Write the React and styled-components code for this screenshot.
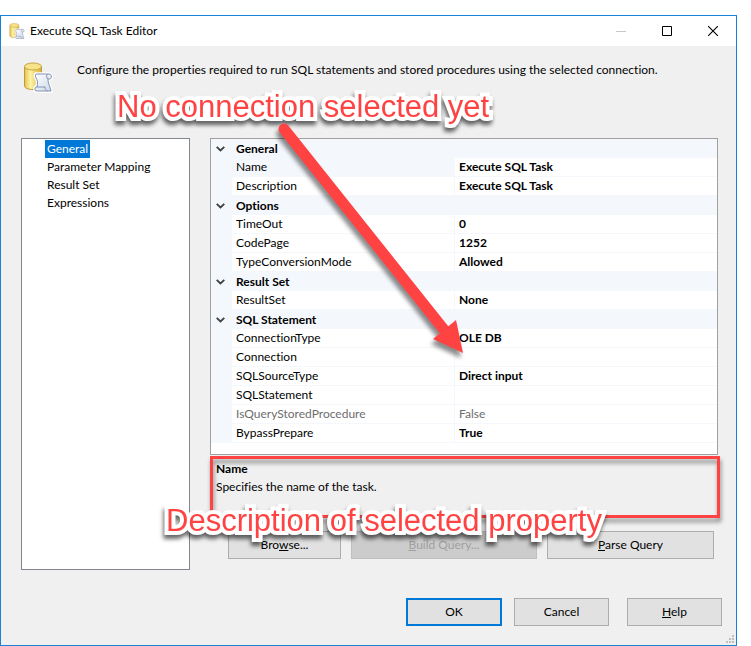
import React from "react";
import styled, { createGlobalStyle, css } from "styled-components";

const GlobalStyle = createGlobalStyle`
  *, *::before, *::after { box-sizing: border-box; }
  body {
    margin: 0;
    background: #fff;
    color: #000;
    font-family: Lato, "Open Sans", sans-serif;
    font-size: 12px;
    line-height: 18px;
    font-variant-ligatures: none;
  }
  button { font: inherit; font-variant-ligatures: none; color: inherit; }
`;

const Page = styled.main`
  padding: 15px 14px 0 0;
`;

const Dialog = styled.section`
  position: relative;
  border: 1px solid #1883d7;
  background: #f0f0f0;
`;

const TitleBar = styled.header`
  display: flex;
  align-items: center;
  height: 30px;
  padding-left: 8px;
  background: #fff;
`;

const Title = styled.h1`
  flex: 1;
  margin: 0 0 0 4px;
  font-size: 12px;
  font-weight: 400;
`;

const CaptionButton = styled.button`
  display: grid;
  place-items: center;
  width: 46px;
  height: 30px;
  padding: 0;
  border: 0;
  background: transparent;
`;

const Intro = styled.div`
  display: flex;
  gap: 22px;
  height: 92px;
  padding: 16px 20px 0 22px;
`;

const IntroText = styled.p`
  margin: 0;
  line-height: 16px;
`;

const Body = styled.div`
  display: grid;
  grid-template-columns: 169px minmax(0, 1fr);
  gap: 20px;
  padding: 0 18px 0 20px;
`;

const PageList = styled.nav`
  display: flex;
  flex-direction: column;
  align-items: flex-start;
  padding: 1px 0 0 23px;
  border: 1px solid #828790;
  background: #fff;
`;

const PageItem = styled.button`
  height: 18px;
  padding: 0 2px;
  border: 0;
  line-height: 18px;
  background: ${(p) => (p.$selected ? "#0078d7" : "transparent")};
  color: ${(p) => (p.$selected ? "#fff" : "#000")};
`;

const Details = styled.div`
  display: flex;
  flex-direction: column;
  padding-bottom: 11px;
`;

const GridFrame = styled.div`
  padding-bottom: 11px;
  border: 1px solid #a0a0a0;
  background: #fff;
`;

const PropertyTable = styled.table`
  width: 100%;
  table-layout: fixed;
  border-collapse: separate;
  border-spacing: 0;
`;

const Col = styled.col`
  width: ${(p) => p.$width};
`;

const cell = css`
  height: 19px;
  padding: 0 0 0 4px;
  line-height: 18px;
  text-align: left;
  white-space: nowrap;
`;

const Gutter = styled.td`
  height: 19px;
  padding: 0;
  background: #f4f7fc;
`;

const Toggle = styled.button`
  display: grid;
  place-items: center;
  width: 19px;
  height: 18px;
  padding: 0;
  border: 0;
  background: transparent;
`;

const CategoryCell = styled.th`
  ${cell}
  background: #f4f7fc;
  font-weight: 700;
`;

const NameCell = styled.th`
  ${cell}
  border-bottom: 1px solid #f4f7fc;
  border-right: 1px solid #f4f7fc;
  background: ${(p) => (p.$selected ? "#f4f7fc" : "#fff")};
  color: ${(p) => (p.$dim ? "#6d6d6d" : "#000")};
  font-weight: 400;
`;

const ValueCell = styled.td`
  ${cell}
  border-bottom: 1px solid #f4f7fc;
  color: ${(p) => (p.$dim ? "#6d6d6d" : "#000")};
  font-weight: ${(p) => (p.$dim ? 400 : 700)};
`;

const Help = styled.div`
  position: relative;
  height: 62px;
  margin-top: 1px;
  padding: 4px 6px;
`;

const HelpTitle = styled.h2`
  margin: 0;
  font-size: 12px;
  line-height: 18px;
`;

const HelpText = styled.p`
  margin: 0;
`;

const QueryActions = styled.div`
  display: grid;
  grid-template-columns: 113fr 186fr 167fr;
  gap: 10px;
  margin-top: 13px;
  padding: 0 4px 0 18px;
`;

const Footer = styled.footer`
  display: flex;
  justify-content: flex-end;
  gap: 12px;
  padding: 28px 14px 19px;
`;

const Button = styled.button`
  height: 28px;
  padding: 0 8px;
  border: 1px solid #adadad;
  background: #e1e1e1;
  line-height: 24px;
  &:disabled {
    border-color: #bfbfbf;
    background: #ccc;
    color: #a0a0a0;
  }
`;

const FooterButton = styled(Button)`
  width: 95px;
  ${(p) => p.$primary && css`
    width: 96px;
    border: 2px solid #0078d7;
  `}
  &:last-child { margin-left: 6px; }
`;

const Grip = styled.svg`
  position: absolute;
  right: 2px;
  bottom: 2px;
`;

const Callout = styled.div`
  position: absolute;
  inset: 0 -2px 0 0;
  border: 3px solid #ff4343;
  filter: drop-shadow(1px 4px 2px rgba(0, 0, 0, 0.45));
  pointer-events: none;
`;

const Caption = styled.div`
  position: absolute;
  left: ${(p) => p.$left};
  top: ${(p) => p.$top};
  color: #ff4343;
  font-family: "Liberation Sans", Arial, sans-serif;
  font-size: 31px;
  line-height: 36px;
  white-space: nowrap;
  -webkit-text-stroke: 8px #fff;
  paint-order: stroke fill;
  stroke-linejoin: round;
  filter: drop-shadow(-1px 4px 2px rgba(0, 0, 0, 0.6));
  pointer-events: none;
`;

const Arrow = styled.svg`
  position: absolute;
  left: 269px;
  top: 99px;
  overflow: visible;
  filter: drop-shadow(-2px 5px 2px rgba(0, 0, 0, 0.45));
  pointer-events: none;
`;

function TaskIcon({ size }) {
  return (
    <svg width={size} height={size} viewBox="0 0 32 32" aria-hidden="true">
      <defs>
        <linearGradient id="gold" x1="0" x2="1">
          <stop offset="0" stopColor="#e3c34a" />
          <stop offset=".35" stopColor="#fff3a8" />
          <stop offset="1" stopColor="#d9b032" />
        </linearGradient>
        <linearGradient id="paper" x1="0" x2="1" y2="1">
          <stop offset="0" stopColor="#fff" />
          <stop offset="1" stopColor="#ccd8ea" />
        </linearGradient>
      </defs>
      <path d="M1.500 4.500v19.500c0 2 3.500 3.500 8.500 3.500s8.500-1.500 8.500-3.500V4.500z" fill="url(#gold)" stroke="#c09a35" />
      <ellipse cx="10" cy="4.500" rx="8.500" ry="3.500" fill="#f7e38a" stroke="#c8a640" />
      <path d="M13 12h14c2 1 2 5-.5 5H25c-.5 4 2.500 8 3 12H13c-1.500-1-1.500-3 0-4h1c1-4 .5-7-1-9-.8-1.500-.8-3 0-4z" fill="#fff" stroke="#fff" strokeWidth="3.500" />
      <path d="M13 12h14c2 1 2 5-.5 5H25c-.5 4 2.500 8 3 12H13c-1.500-1-1.500-3 0-4h1c1-4 .5-7-1-9-.8-1.500-.8-3 0-4z" fill="url(#paper)" stroke="#8293b0" />
      <path d="M24.500 12c-1.500 1.500-1 4 .5 5M14 25h8c0 2 1 3.500 2.500 4" fill="none" stroke="#8293b0" />
    </svg>
  );
}

const pages = ["General", "Parameter Mapping", "Result Set", "Expressions"];

const categories = [
  { name: "General", rows: [
    { name: "Name", value: "Execute SQL Task", selected: true },
    { name: "Description", value: "Execute SQL Task" },
  ] },
  { name: "Options", rows: [
    { name: "TimeOut", value: "0" },
    { name: "CodePage", value: "1252" },
    { name: "TypeConversionMode", value: "Allowed" },
  ] },
  { name: "Result Set", rows: [{ name: "ResultSet", value: "None" }] },
  { name: "SQL Statement", rows: [
    { name: "ConnectionType", value: "OLE DB" },
    { name: "Connection", value: "" },
    { name: "SQLSourceType", value: "Direct input" },
    { name: "SQLStatement", value: "" },
    { name: "IsQueryStoredProcedure", value: "False", dim: true },
    { name: "BypassPrepare", value: "True" },
  ] },
];

function PropertyGrid() {
  return (
    <GridFrame>
      <PropertyTable aria-label="Task properties">
        <colgroup>
          <Col $width="21px" />
          <Col $width="223px" />
          <Col $width="auto" />
        </colgroup>
        {categories.map((category) => (
          <tbody key={category.name}>
            <tr>
              <Gutter>
                <Toggle type="button" aria-label={`Collapse ${category.name}`}>
                  <svg width="9" height="6" viewBox="0 0 9 6" aria-hidden="true">
                    <path d="M.7.8 4.500 4.500 8.300.8" fill="none" stroke="#404040" strokeWidth="1.800" />
                  </svg>
                </Toggle>
              </Gutter>
              <CategoryCell colSpan={2} scope="rowgroup">{category.name}</CategoryCell>
            </tr>
            {category.rows.map((row) => (
              <tr key={row.name}>
                <Gutter />
                <NameCell scope="row" $selected={row.selected} $dim={row.dim}>{row.name}</NameCell>
                <ValueCell $dim={row.dim}>{row.value}</ValueCell>
              </tr>
            ))}
          </tbody>
        ))}
      </PropertyTable>
    </GridFrame>
  );
}

export default function App() {
  return (
    <Page>
      <GlobalStyle />
      <Dialog aria-label="Execute SQL Task Editor">
        <TitleBar>
          <TaskIcon size={17} />
          <Title>Execute SQL Task Editor</Title>
          <CaptionButton type="button" aria-label="Minimize" disabled>
            <svg width="10" height="10" aria-hidden="true"><path d="M0 5.500h10" stroke="#c8c8c8" /></svg>
          </CaptionButton>
          <CaptionButton type="button" aria-label="Maximize">
            <svg width="10" height="10" aria-hidden="true"><path d="M.5.5h9v9h-9z" fill="none" stroke="#000" /></svg>
          </CaptionButton>
          <CaptionButton type="button" aria-label="Close">
            <svg width="10" height="10" aria-hidden="true"><path d="m0 0 10 10m0-10-10 10" stroke="#000" strokeWidth="1.100" /></svg>
          </CaptionButton>
        </TitleBar>
        <Intro>
          <TaskIcon size={32} />
          <IntroText>
            Configure the properties required to run SQL statements and stored procedures using the selected connection.
          </IntroText>
        </Intro>
        <Body>
          <PageList aria-label="Pages">
            {pages.map((name, i) => (
              <PageItem key={name} type="button" $selected={i === 0} aria-current={i === 0 ? "page" : undefined}>
                {name}
              </PageItem>
            ))}
          </PageList>
          <Details>
            <PropertyGrid />
            <Help>
              <HelpTitle>Name</HelpTitle>
              <HelpText>Specifies the name of the task.</HelpText>
              <Callout />
            </Help>
            <QueryActions>
              <Button type="button">Bro<u>w</u>se...</Button>
              <Button type="button" disabled><u>B</u>uild Query...</Button>
              <Button type="button"><u>P</u>arse Query</Button>
            </QueryActions>
          </Details>
        </Body>
        <Footer>
          <FooterButton type="button" $primary>OK</FooterButton>
          <FooterButton type="button">Cancel</FooterButton>
          <FooterButton type="button"><u>H</u>elp</FooterButton>
        </Footer>
        <Grip width="8" height="8" aria-hidden="true">
          <path d="M6 0h2v2H6zM3 3h2v2H3zM6 3h2v2H6zM0 6h2v2H0zM3 6h2v2H3zM6 6h2v2H6z" fill="#bfbfbf" />
        </Grip>
        <Caption $left="116px" $top="73px">No connection selected yet</Caption>
        <Caption $left="165px" $top="487px">Description of selected property</Caption>
        <Arrow width="200" height="240" aria-hidden="true">
          <path d="M14 14 175 216" stroke="#ff4343" strokeWidth="11" strokeLinecap="round" />
          <path d="M193 238 163 224 186 205z" fill="#ff4343" />
        </Arrow>
      </Dialog>
    </Page>
  );
}
